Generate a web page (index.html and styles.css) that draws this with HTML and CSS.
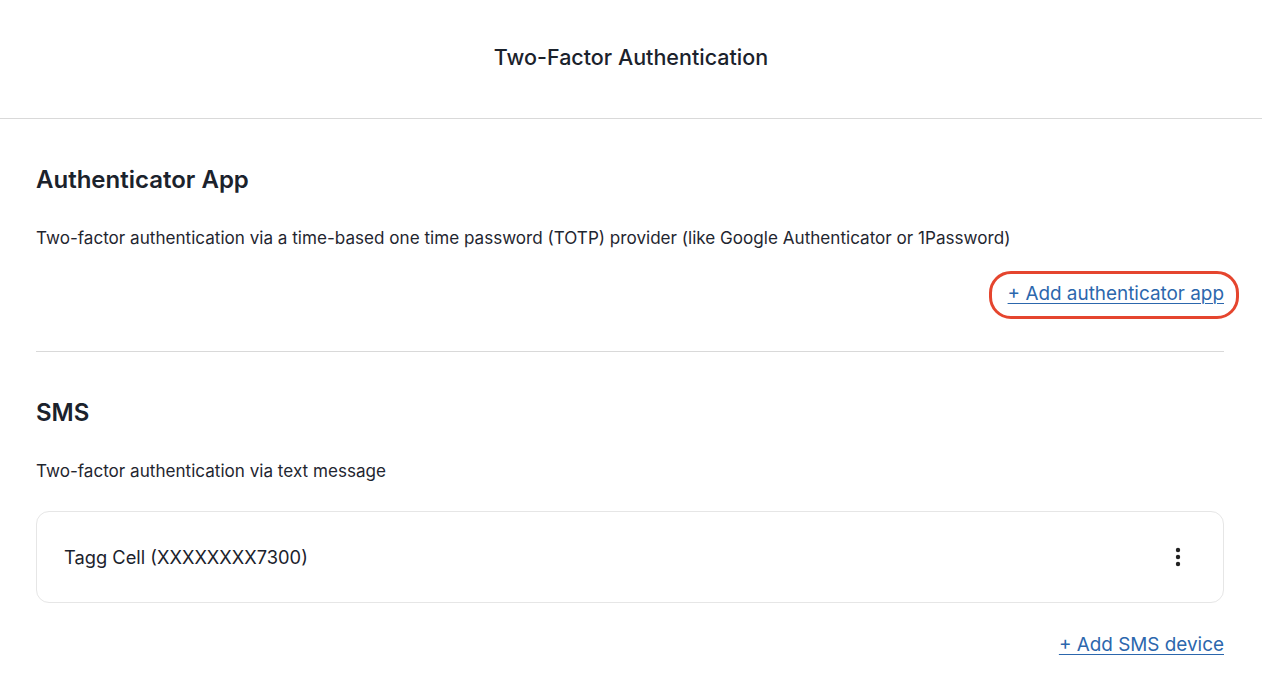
FILE: index.html
```html
<!DOCTYPE html>
<html>
<head>
<meta charset="utf-8">
<link rel="stylesheet" href="styles.css">
</head>
<body>
<header class="top">
  <h1 class="top-title">Two-Factor Authentication</h1>
</header>
<main class="content">
  <section class="section">
    <h2 class="section-title">Authenticator App</h2>
    <p class="section-desc">Two-factor authentication via a time-based one time password (TOTP) provider (like Google Authenticator or 1Password)</p>
    <div class="actions">
      <a class="add-link highlighted" href="#">+ Add authenticator app</a>
    </div>
  </section>
  <hr class="divider">
  <section class="section">
    <h2 class="section-title">SMS</h2>
    <p class="section-desc">Two-factor authentication via text message</p>
    <div class="device-card">
      <span class="device-name">Tagg Cell (XXXXXXXX7300)</span>
      <svg class="kebab" width="6" height="20" viewBox="0 0 6 20"><circle cx="3" cy="3" r="2.2" fill="#222"/><circle cx="3" cy="10" r="2.2" fill="#222"/><circle cx="3" cy="17" r="2.2" fill="#222"/></svg>
    </div>
    <div class="actions actions-sms">
      <a class="add-link" href="#">+ Add SMS device</a>
    </div>
  </section>
</main>
</body>
</html>
```
FILE: styles.css
```css
* { box-sizing: border-box; }
body {
  margin: 0;
  font-family: Inter, "Noto Sans", sans-serif;
  color: #1b222c;
  background: #fff;
}
.top {
  height: 119px;
  border-bottom: 1px solid #d9d9d9;
  display: flex;
  align-items: center;
  justify-content: center;
  padding-bottom: 4px;
}
.top-title {
  margin: 0;
  font-size: 21.5px;
  font-weight: 500;
  color: #1b222c;
}
.content {
  padding: 0 38px 0 36px;
}
.section-title {
  margin: 0;
  font-size: 24px;
  font-weight: 600;
  line-height: 30px;
  margin-top: 46px;
}
.section-desc {
  margin: 32px 0 0;
  font-size: 17.1px;
  line-height: 21px;
  color: #1f2630;
}
.actions {
  display: flex;
  justify-content: flex-end;
  margin-top: 35px;
}
.add-link {
  position: relative;
  font-size: 18.9px;
  line-height: 22px;
  color: #2c67ad;
  text-decoration: underline;
  text-underline-offset: 3px;
  text-decoration-thickness: 1px;
}
.highlighted::after {
  content: "";
  position: absolute;
  left: -19px;
  right: -15px;
  top: -12px;
  bottom: -14px;
  border: 3px solid #e5452e;
  border-radius: 22px;
}
.divider {
  margin: 46px 0 0;
  border: 0;
  border-top: 1px solid #d9d9d9;
}
.device-card {
  margin-top: 30px;
  height: 92px;
  border: 1px solid #e6e6e6;
  border-radius: 13px;
  display: flex;
  align-items: center;
  justify-content: space-between;
  padding: 0 42px 0 27px;
}
.device-name {
  font-size: 18.3px;
  color: #1b222c;
}
.kebab { display: block; }
.actions-sms { margin-top: 31px; }
```
